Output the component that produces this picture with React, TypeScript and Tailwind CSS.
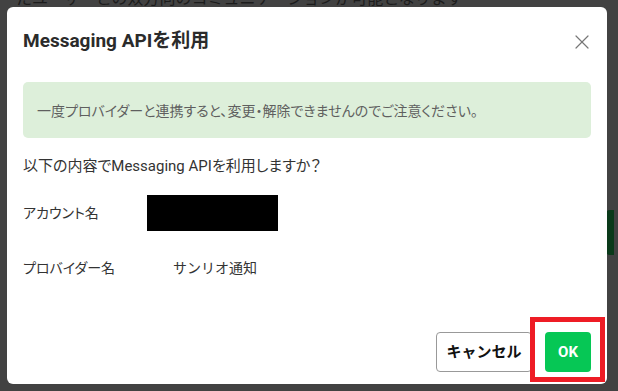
import { X } from "lucide-react";

const font = "font-['Roboto','Noto_Sans_CJK_JP',sans-serif]";

export default function App() {
  return (
    <div className={`relative h-[391px] w-[618px] overflow-hidden bg-[#424242] ${font}`}>
      {/* page behind the overlay */}
      <div className="absolute left-[16px] top-[-13px] whitespace-nowrap text-[16px] text-[#1c1c1c]">
        たユーザーとの双方向のコミュニケーションが可能となります
      </div>
      <div className="absolute right-[4px] top-[210px] h-[45px] w-[8px] rounded-l-[4px] bg-[#0a3a1a]" />

      {/* modal */}
      <div className="relative ml-[7px] mt-[7px] flex h-[377px] w-[600px] flex-col rounded-[6px] bg-white px-[16px]">
        <div className="flex h-[75px] items-center justify-between pb-[6px]">
          <h2 className="text-[19px] font-bold text-[#2b2b2b]">Messaging APIを利用</h2>
          <X className="mr-[-3px] h-[24px] w-[24px] text-[#777]" strokeWidth={1.2} />
        </div>

        <div className="flex h-[56px] items-center rounded-[5px] bg-[#ddefda] px-[14px] pt-[2px] text-[14px] text-[#5f5f5f] [font-feature-settings:'palt']">
          一度プロバイダーと連携すると、変更・解除できませんのでご注意ください。
        </div>

        <p className="mt-[17px] text-[15px] leading-[22px] text-[#333] [font-feature-settings:'palt']">
          以下の内容でMessaging APIを利用しますか？
        </p>

        <div className="mt-[18px] flex h-[36px] items-center text-[14px] text-[#333] [font-feature-settings:'palt']">
          <span className="w-[124px]">アカウント名</span>
          <span className="h-[36px] w-[131px] bg-black" />
        </div>

        <div className="mt-[27px] flex items-center text-[14px] leading-[21px] text-[#333]">
          <span className="w-[150px] [font-feature-settings:'palt']">プロバイダー名</span>
          <span>サンリオ通知</span>
        </div>

        <div className="mt-auto mb-[12px] flex justify-end gap-[13px]">
          <button className="h-[40px] w-[96px] rounded-[4px] border border-[#999] bg-white text-[15px] font-bold text-[#111]">
            キャンセル
          </button>
          <button className="h-[40px] w-[46px] rounded-[4px] bg-[#06c755] text-[15px] font-bold text-white">
            OK
          </button>
        </div>
      </div>

      {/* highlight annotation */}
      <div className="absolute left-[530px] top-[317px] h-[65px] w-[75px] border-[5px] border-[#ee1c25]" />
    </div>
  );
}
